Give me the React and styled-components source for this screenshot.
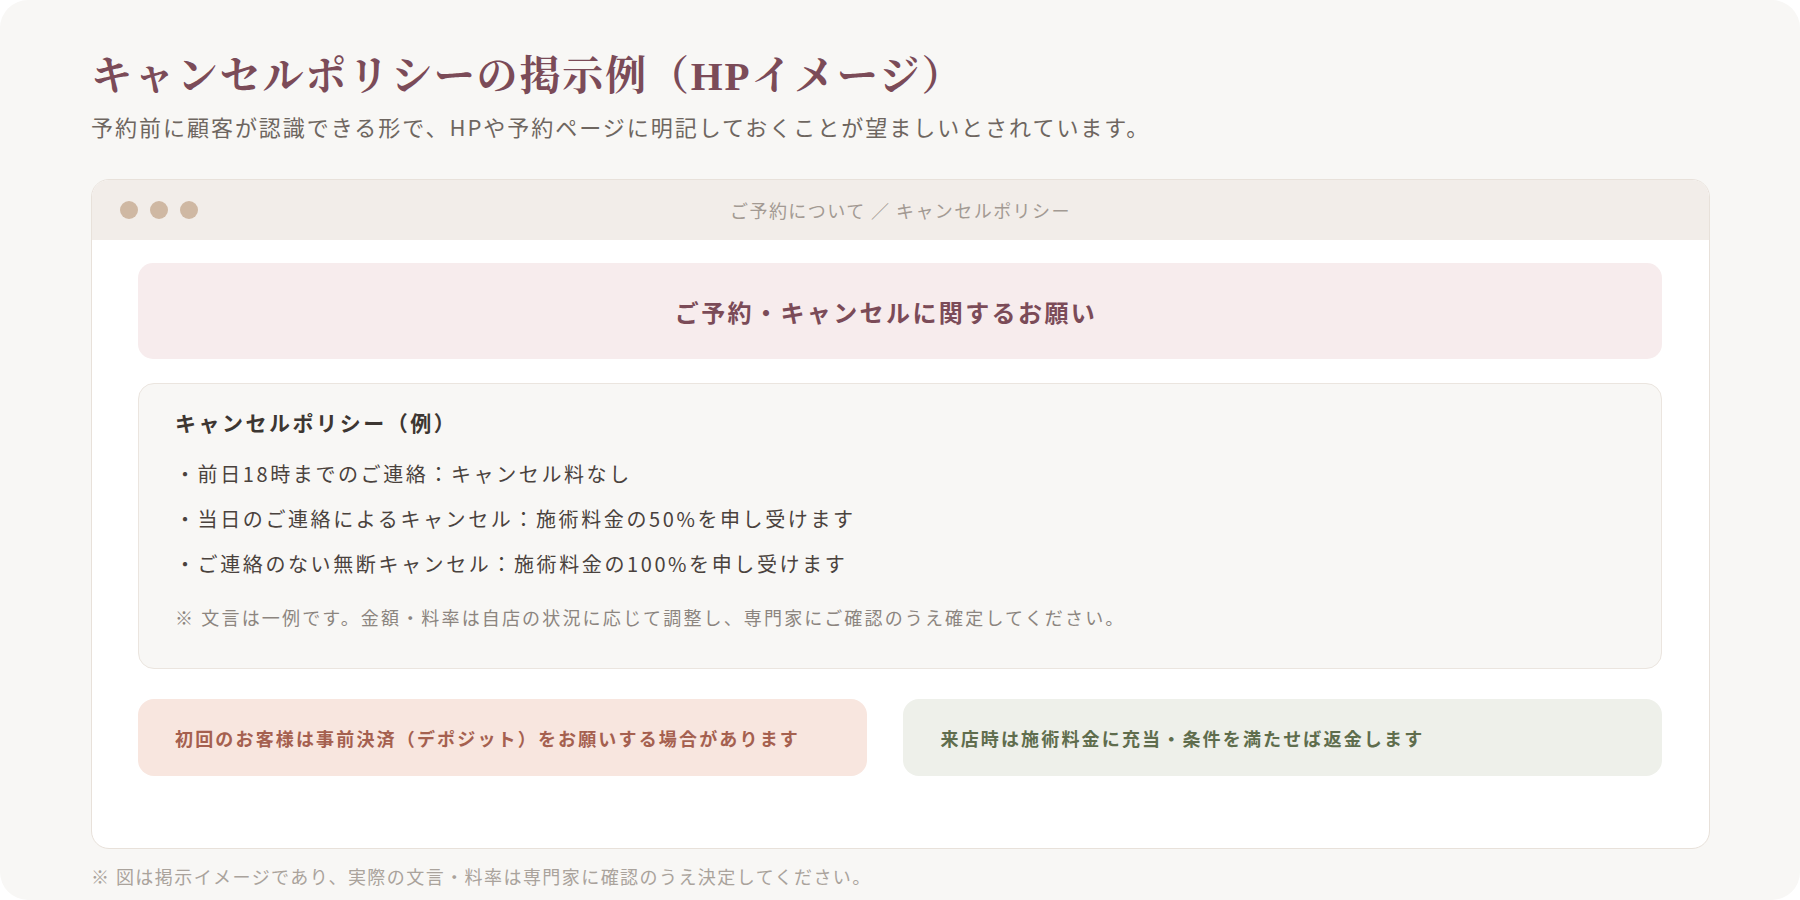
import React from 'react';
import styled, { createGlobalStyle } from 'styled-components';

const GlobalStyle = createGlobalStyle`
  html, body {
    margin: 0;
    padding: 0;
    background: #ffffff;
  }
  body {
    font-family: "Noto Sans CJK JP", "Noto Sans", sans-serif;
  }
`;

const Page = styled.div`
  width: 1800px;
  height: 900px;
  box-sizing: border-box;
  background: #f8f7f5;
  border-radius: 28px;
  padding: 48px 90px 0 91px;
  display: flex;
  flex-direction: column;
  font-family: "Noto Sans CJK JP", "Noto Sans", sans-serif;
`;

const Title = styled.h1`
  margin: 0;
  font-family: "Liberation Serif", "Noto Serif CJK JP", "Noto Sans CJK JP", serif;
  font-size: 41px;
  line-height: 56px;
  font-weight: 700;
  letter-spacing: 0.045em;
  color: #7b4b58;
`;

const Lead = styled.p`
  margin: 6px 0 0;
  font-size: 22px;
  line-height: 32px;
  letter-spacing: 0.09em;
  color: #6e6660;
`;

const Window = styled.div`
  margin-top: 37px;
  background: #ffffff;
  border: 1.5px solid #e8e1da;
  border-radius: 18px;
  overflow: hidden;
`;

const WindowBar = styled.div`
  position: relative;
  height: 60px;
  background: #f2ede9;
  display: flex;
  align-items: center;
  justify-content: center;
`;

const Dots = styled.div`
  position: absolute;
  left: 28px;
  top: 21px;
  display: flex;
  gap: 12px;
`;

const Dot = styled.span`
  width: 18px;
  height: 18px;
  border-radius: 50%;
  background: #cfb8a3;
`;

const BarTitle = styled.div`
  font-size: 18px;
  letter-spacing: 0.08em;
  color: #a39a93;
`;

const WindowBody = styled.div`
  padding: 23px 47px 72px 46px;
  display: flex;
  flex-direction: column;
`;

const Banner = styled.div`
  height: 96px;
  border-radius: 15px;
  background: #f7eced;
  display: flex;
  align-items: center;
  justify-content: center;
  padding-right: 28px;
  font-size: 24px;
  font-weight: 700;
  letter-spacing: 0.1em;
  color: #7b4b58;
`;

const PolicyCard = styled.div`
  margin-top: 24px;
  background: #f8f7f5;
  border: 1.5px solid #ebe5df;
  border-radius: 16px;
  padding: 22px 36px 37px;
`;

const PolicyHeading = styled.h2`
  margin: 0;
  font-size: 21px;
  line-height: 32px;
  font-weight: 700;
  letter-spacing: 0.12em;
  color: #3d3632;
`;

const PolicyList = styled.ul`
  list-style: none;
  margin: 20px 0 0;
  padding: 0;
  display: flex;
  flex-direction: column;
  gap: 13px;
`;

const PolicyItem = styled.li`
  font-size: 20px;
  line-height: 32px;
  letter-spacing: 0.13em;
  color: #4a423d;
`;

const Note = styled.p`
  margin: 23px 0 0;
  font-size: 18px;
  line-height: 28px;
  letter-spacing: 0.12em;
  color: #8c857f;
`;

const Notices = styled.div`
  margin-top: 30px;
  display: grid;
  grid-template-columns: 729fr 758fr;
  gap: 36px;
`;

const Notice = styled.div`
  height: 77px;
  border-radius: 16px;
  padding: 0 37px;
  display: flex;
  align-items: center;
  font-size: 18px;
  font-weight: 700;
  letter-spacing: 0.12em;
  background: ${(p) => (p.$tone === 'green' ? '#eef0ea' : '#f8e6df')};
  color: ${(p) => (p.$tone === 'green' ? '#5f6d4d' : '#a5604f')};
`;

const Footnote = styled.p`
  margin: 15px 0 0;
  font-size: 18px;
  line-height: 24px;
  letter-spacing: 0.08em;
  color: #aaa39c;
`;

const policies = [
  '・前日18時までのご連絡：キャンセル料なし',
  '・当日のご連絡によるキャンセル：施術料金の50%を申し受けます',
  '・ご連絡のない無断キャンセル：施術料金の100%を申し受けます',
];

export default function App() {
  return (
    <>
      <GlobalStyle />
      <Page>
        <Title>キャンセルポリシーの掲示例（HPイメージ）</Title>
        <Lead>予約前に顧客が認識できる形で、HPや予約ページに明記しておくことが望ましいとされています。</Lead>
        <Window>
          <WindowBar>
            <Dots>
              <Dot />
              <Dot />
              <Dot />
            </Dots>
            <BarTitle>ご予約について ／ キャンセルポリシー</BarTitle>
          </WindowBar>
          <WindowBody>
            <Banner>ご予約・キャンセルに関するお願い</Banner>
            <PolicyCard>
              <PolicyHeading>キャンセルポリシー（例）</PolicyHeading>
              <PolicyList>
                {policies.map((t) => (
                  <PolicyItem key={t}>{t}</PolicyItem>
                ))}
              </PolicyList>
              <Note>※ 文言は一例です。金額・料率は自店の状況に応じて調整し、専門家にご確認のうえ確定してください。</Note>
            </PolicyCard>
            <Notices>
              <Notice $tone="rose">初回のお客様は事前決済（デポジット）をお願いする場合があります</Notice>
              <Notice $tone="green">来店時は施術料金に充当・条件を満たせば返金します</Notice>
            </Notices>
          </WindowBody>
        </Window>
        <Footnote>※ 図は掲示イメージであり、実際の文言・料率は専門家に確認のうえ決定してください。</Footnote>
      </Page>
    </>
  );
}
